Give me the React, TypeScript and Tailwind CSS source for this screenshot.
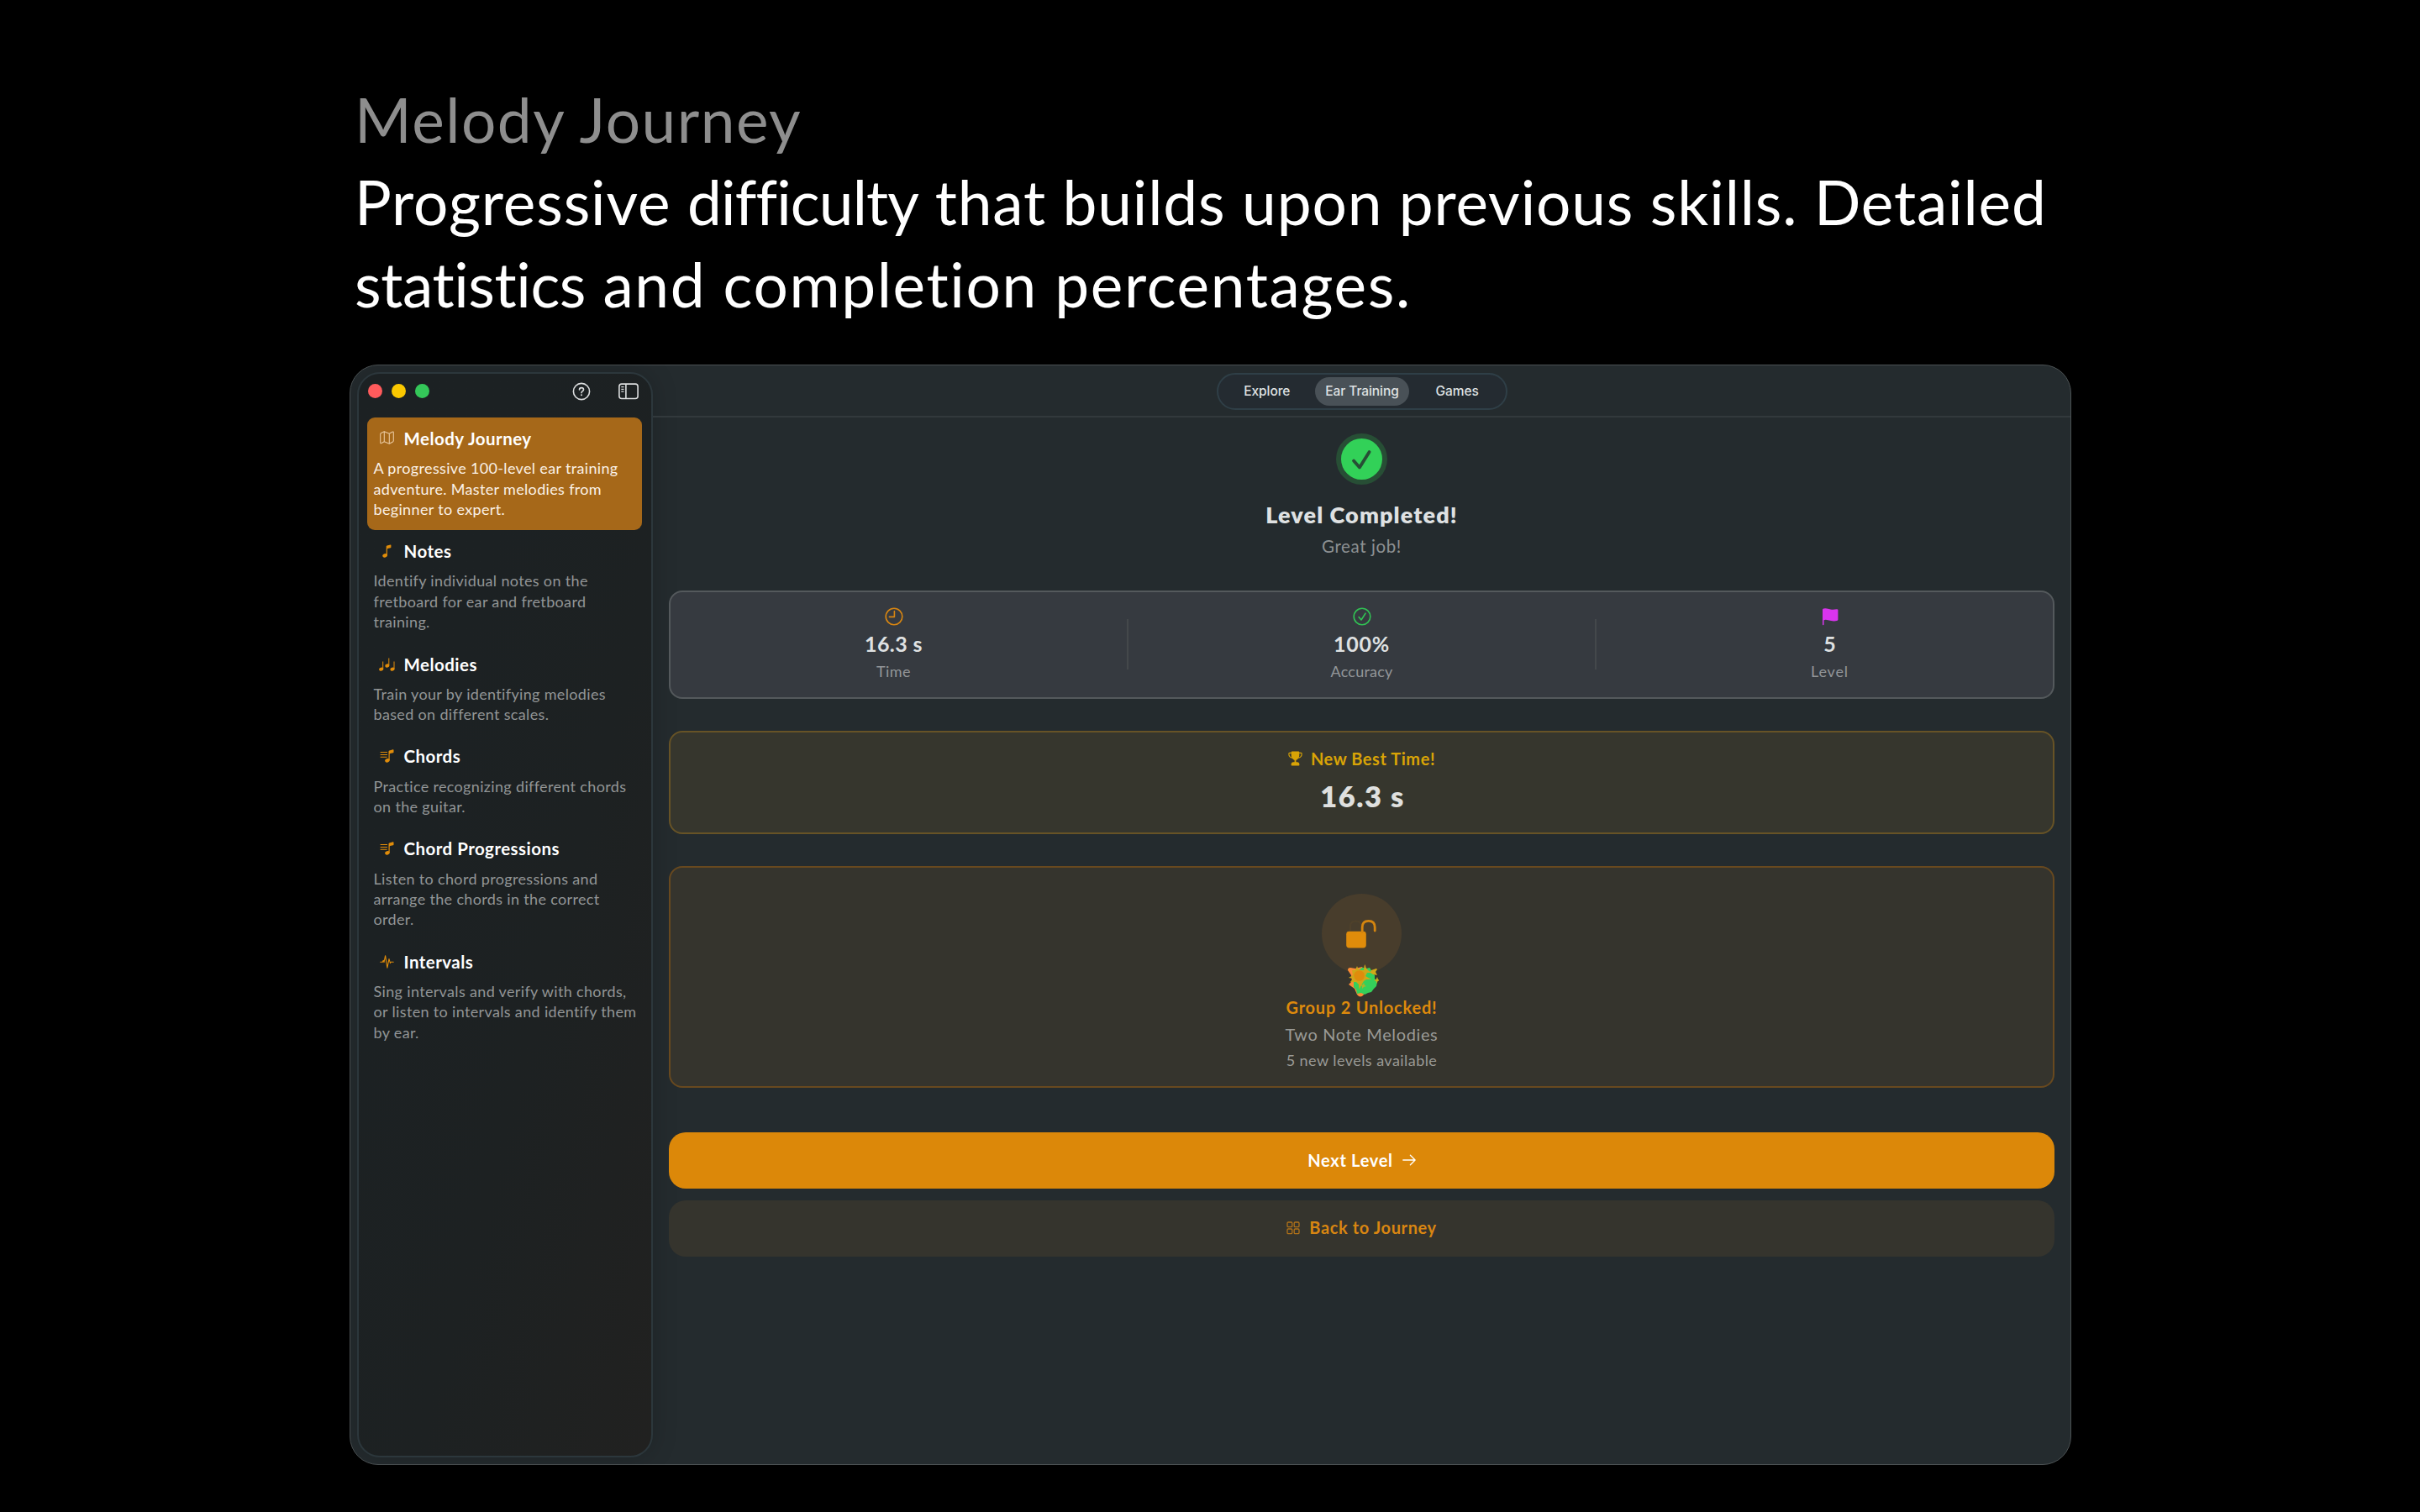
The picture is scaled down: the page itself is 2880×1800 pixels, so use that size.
import type { ReactNode } from "react";
import clsx from "clsx";

type IconProps = { className?: string };

function MapIcon({ className }: IconProps) {
  return (
    <svg viewBox="0 0 17 16" className={className} fill="none" stroke="currentColor" strokeWidth="1.1" strokeLinejoin="round">
      <path d="M.7 4Q.7 3 1.6 2.5L5.3.7L11.3 3.2L14.8 1.2Q16.3.5 16.3 2V11.6Q16.3 12.5 15.5 13L11.3 15.3L5.3 12.8L2.1 14.6Q.7 15.3.7 13.8Z" />
      <path d="M5.3.7V12.8M11.3 3.2V15.3" />
    </svg>
  );
}

function NoteIcon({ className }: IconProps) {
  return (
    <svg viewBox="0 0 17 16" className={className} fill="currentColor">
      <ellipse cx="6.1" cy="13.3" rx="2.9" ry="2.2" transform="rotate(-18 6.1 13.3)" />
      <path d="M7.7 13.2V2.5Q7.7 1.6 8.6 1.4L12.7.4Q13.4.3 13.4 1V3.4Q13.4 4 12.7 4.2L9.4 5Q8.9 5.1 8.9 5.7V13.4Z" />
    </svg>
  );
}

function NotesIcon({ className }: IconProps) {
  return (
    <svg viewBox="0 0 19 16" className={className} fill="currentColor">
      <ellipse cx="2.7" cy="13.6" rx="2.6" ry="2" transform="rotate(-18 2.7 13.6)" />
      <ellipse cx="9.8" cy="9.5" rx="2.6" ry="2" transform="rotate(-18 9.8 9.5)" />
      <ellipse cx="16" cy="13.6" rx="2.6" ry="2" transform="rotate(-18 16 13.6)" />
      <path d="M4.2 4.4h1v9h-1zM11.3.4h1v9h-1zM17.5 4.4h1v9h-1z" />
    </svg>
  );
}

function NoteListIcon({ className }: IconProps) {
  return (
    <svg viewBox="0 0 17 16" className={className} fill="currentColor">
      <path d="M.6 3h8.4v1H.6zM.6 5.9h8.4v1H.6zM.6 8.8h8v1H.6z" />
      <ellipse cx="8.9" cy="13.3" rx="2.8" ry="2.2" transform="rotate(-18 8.9 13.3)" />
      <path d="M10.5 13.2V2.5Q10.5 1.6 11.4 1.4L15.7.3Q16.5.2 16.5.9V3.4Q16.5 4 15.8 4.2L12.3 5Q11.7 5.1 11.7 5.7V13.4Z" />
    </svg>
  );
}

function PulseIcon({ className }: IconProps) {
  return (
    <svg viewBox="0 0 17 16" className={className} fill="none" stroke="currentColor" strokeWidth="1.1" strokeLinecap="round" strokeLinejoin="round">
      <path d="M.8 8.2H3.4L4.2 6.3L5 8.6L6.6.7L8.9 15.2L11 4.6L12.4 9.6L13.2 8.2H16.2" />
    </svg>
  );
}

const items = [
  {
    title: "Melody Journey",
    icon: MapIcon,
    lines: ["A progressive 100-level ear training", "adventure. Master melodies from", "beginner to expert."],
    selected: true,
  },
  {
    title: "Notes",
    icon: NoteIcon,
    lines: ["Identify individual notes on the", "fretboard for ear and fretboard", "training."],
  },
  {
    title: "Melodies",
    icon: NotesIcon,
    lines: ["Train your by identifying melodies", "based on different scales."],
  },
  {
    title: "Chords",
    icon: NoteListIcon,
    lines: ["Practice recognizing different chords", "on the guitar."],
  },
  {
    title: "Chord Progressions",
    icon: NoteListIcon,
    lines: ["Listen to chord progressions and", "arrange the chords in the correct", "order."],
  },
  {
    title: "Intervals",
    icon: PulseIcon,
    lines: ["Sing intervals and verify with chords,", "or listen to intervals and identify them", "by ear."],
  },
];

function Sidebar() {
  return (
    <aside className="my-[8px] ml-[8px] flex w-[352px] shrink-0 flex-col rounded-[27px] border-2 border-[#2c373c] bg-linear-to-br from-[#1c2123] from-30% via-[#1d2122] via-60% to-[#212120] pr-[11px] pl-[10px] shadow-[0_0_30px_rgba(0,0,0,0.18)]">
      <div className="flex h-[52px] items-start pt-[10px]">
        <div className="flex h-[21px] items-center gap-[11px]">
          <span className="ml-[1px] size-[17px] rounded-full bg-[#ff5b5c]" />
          <span className="size-[17px] rounded-full bg-[#fac800]" />
          <span className="size-[17px] rounded-full bg-[#34c759]" />
        </div>
        <svg viewBox="0 0 22 22" className="ml-auto size-[22px] text-[#dcdedf]" fill="none" stroke="currentColor" strokeWidth="1.6">
          <circle cx="11" cy="11" r="9.6" />
          <path d="M8.5 8.9Q8.5 6.6 11 6.6Q13.5 6.6 13.5 8.7Q13.5 9.9 12.2 10.7Q11 11.5 11 12.7" strokeLinecap="round" />
          <circle cx="11" cy="15.3" r="1" fill="currentColor" stroke="none" />
        </svg>
        <svg viewBox="0 0 24 20" className="mr-[4px] ml-[33px] mt-[1px] h-5 w-6 text-[#dcdedf]" fill="none" stroke="currentColor" strokeWidth="1.6">
          <rect x=".9" y="1.1" width="22.2" height="17.4" rx="3" />
          <path d="M8.9 1.1V18.5" />
          <path d="M3.3 4.6H6.5M3.3 7.4H6.5M3.3 10.2H6.5" strokeWidth="1.2" />
        </svg>
      </div>
      {items.map((item) => (
        <div
          key={item.title}
          className={clsx("rounded-[9px] pt-[11px] pb-[13.1px] pl-[7.5px]", item.selected && "bg-[#a66819]")}
        >
          <div className="flex h-7 items-center">
            <span className="flex w-8 justify-center">
              <item.icon
                className={clsx("h-4", item.selected ? "mb-0.5 text-[#eac9a0]" : "text-[#e08c0a]")}
              />
            </span>
            <h3 className="ml-[4px] text-[20.5px] leading-7 font-bold tracking-[0.46px] whitespace-nowrap text-white">
              {item.title}
            </h3>
          </div>
          <p
            className={clsx(
              "mt-[9.2px] text-[18px] leading-[24.33px] tracking-[0.34px]",
              item.selected ? "text-[#fbf1e6]" : "text-[#929596]",
            )}
          >
            {item.lines.map((line) => (
              <span key={line} className="block whitespace-nowrap">
                {line}
              </span>
            ))}
          </p>
        </div>
      ))}
    </aside>
  );
}

function Toolbar() {
  return (
    <header className="flex h-[62px] shrink-0 justify-center border-b-2 border-[#32393c] pt-[9px]">
      <nav className="flex h-[44px] w-[346px] items-center rounded-full border-2 border-[#2f3f47] bg-[#242b31] pl-px font-['Inter'] text-[15.5px] font-medium tracking-[-0.08px] text-[#dfe1e2]">
        <span className="w-[115px] text-center">Explore</span>
        <span className="flex h-[34px] w-[112px] items-center justify-center rounded-full bg-[#495157]">
          Ear Training
        </span>
        <span className="w-[115px] text-center">Games</span>
      </nav>
    </header>
  );
}

function Stat({ icon, value, valueClass, label, labelClass }: {
  icon: ReactNode;
  value: string;
  valueClass: string;
  label: string;
  labelClass: string;
}) {
  return (
    <div className="flex flex-1 flex-col items-center">
      {icon}
      <div className={clsx("mt-[5.5px] text-[25px] leading-[30px] font-bold text-[#dfe1e2]", valueClass)}>{value}</div>
      <div className={clsx("mt-[7.5px] text-[18px] leading-[22px] text-[#939699]", labelClass)}>{label}</div>
    </div>
  );
}

function Stats() {
  return (
    <section className="mt-[41px] flex h-[129px] items-start gap-[34px] rounded-[16px] border-[2.5px] border-[#54595c] bg-[#363a40] px-[22px] pt-[18px]">
      <Stat
        icon={
          <svg viewBox="0 0 22 22" className="size-[22px] text-[#d98611]" fill="none" stroke="currentColor" strokeWidth="1.6">
            <circle cx="11" cy="11" r="9.8" />
            <path d="M11.4 4.6V11.4H5.4" strokeLinecap="round" strokeLinejoin="round" />
          </svg>
        }
        value="16.3 s"
        valueClass="tracking-[0.42px]"
        label="Time"
        labelClass="tracking-[0.5px]"
      />
      <div className="mt-[14px] h-[60px] w-0.5 bg-[#44484b]" />
      <Stat
        icon={
          <svg viewBox="0 0 22 22" className="size-[22px] text-[#31c254]" fill="none" stroke="currentColor" strokeWidth="1.6">
            <circle cx="11" cy="11" r="9.8" />
            <path d="M7.1 11.6L10 15L15 7.2" strokeLinecap="round" strokeLinejoin="round" />
          </svg>
        }
        value="100%"
        valueClass="tracking-[0.7px]"
        label="Accuracy"
        labelClass="tracking-[0.22px]"
      />
      <div className="mt-[14px] h-[60px] w-0.5 bg-[#44484b]" />
      <Stat
        icon={
          <svg viewBox="0 0 22 22" className="size-[22px] text-[#d934ee]" fill="currentColor">
            <path d="M2 3Q2 2 3.2 1.6Q5 1.1 7.2 1.5Q9.5 2 11.6 2.5Q14.6 3.1 18.6 2.3Q20.4 2 20.4 3.3V14.4Q20.4 15.6 19 16Q15.5 16.9 12.2 16Q9.6 15.3 7.2 14.9Q5 14.6 3.5 15.2V20.4Q3.5 21.2 2.75 21.2Q2 21.2 2 20.4Z" />
          </svg>
        }
        value="5"
        valueClass="tracking-normal"
        label="Level"
        labelClass="tracking-[0.85px]"
      />
    </section>
  );
}

function BestTime() {
  return (
    <section className="mt-[38px] flex h-[123px] flex-col items-center rounded-[16px] border-2 border-[#675326] bg-[#36362d] pt-[19px]">
      <div className="flex h-6 items-center text-[#d9a406]">
        <svg viewBox="0 0 17 18" className="mr-[10px] h-[18px] w-[17px]" fill="currentColor">
          <path d="M3.7 1.5Q3.7.5 4.7.5H12.3Q13.3.5 13.3 1.5V5Q13.2 9 9.4 11V13.3H10.8Q13.4 13.5 13.4 16.3V16.8Q13.4 17.6 12.6 17.6H4.4Q3.6 17.6 3.6 16.8V16.3Q3.6 13.5 6.2 13.3H7.6V11Q3.8 9 3.7 5Z" />
          <path d="M3.9 2.4H1.7Q.8 2.4.8 3.4Q.9 7.4 5 8.3M13.1 2.4H15.3Q16.2 2.4 16.2 3.4Q16.1 7.4 12 8.3" fill="none" stroke="currentColor" strokeWidth="1.1" />
        </svg>
        <span className="text-[20px] leading-6 font-bold tracking-[0.56px]">New Best Time!</span>
      </div>
      <div className="mt-[13px] pl-[2px] text-[34.5px] leading-10 font-extrabold tracking-[1.5px] text-[#dfe0df]">16.3 s</div>
    </section>
  );
}

// burst of stars that goes off under the lock
function Confetti() {
  return (
    <svg viewBox="0 0 40 42" className="absolute top-[82px] left-[28px] h-[42px] w-[40px]">
      <path d="M3 9Q3 6 6 6L12 7L20 5L32 22L22 38Q18 43 14 38L11 31L4 26L8 22L7 15Z" fill="#fb8b35" />
      <path d="M11 11L17 8L20 6L22 6L25 7L29 6L32 11L35 15L35 19L38 23L37 28L34 31L31 35L27 36L23 38L19 36L14 37L13 32L10 29L10 21Z" fill="#35d05a" />
      <path d="M14 4L15.6 8L19 9L22 9L22.6 4L23.5 2L24.6 6L27 9L30 11L31 9L37 7L38 8L36 11L38 15L33 14L30 12L26 12L24 16L31 20L25 20L22 22L19 27L16.5 32L16 26L13 23L6 23L9 19L4 18L9 15L8 9L12 9Z" fill="#cfa718" />
      <path d="M38 17L39 20L41 21L38.6 22L37.6 25L36.6 22L34 21L36.6 20Z" fill="#c3ae1c" />
      <path d="M22 24L23 27L25 28L22 29L20 31L20 28L18 27L21 26Z" fill="#a9b52a" />
      <circle cx="16.6" cy="15.5" r="6.3" fill="#df8c0c" />
    </svg>
  );
}

function Unlocked() {
  return (
    <section className="mt-[38px] flex h-[264px] flex-col items-center rounded-[16px] border-[2.5px] border-[#68491f] bg-[#35342d] pt-[30.5px]">
      <div className="relative size-[95px] rounded-full bg-[#483d2c]">
        <svg viewBox="0 0 95 95" className="size-[95px]">
          <path d="M34 44V39Q34 32.5 40.5 32.5Q47 32.5 47 39V44" fill="none" stroke="#4f412b" strokeWidth="2" />
          <rect x="29.2" y="44.8" width="23.6" height="19.6" rx="3.4" fill="#e08c0a" />
          <path d="M48.2 45.5V40Q48.2 32.3 55.7 32.3Q63.2 32.3 63.2 40V44" fill="none" stroke="#d4850f" strokeWidth="2.8" strokeLinecap="round" />
        </svg>
        <Confetti />
      </div>
      <div className="mt-[28px] text-[20px] leading-6 font-bold tracking-[0.78px] text-[#de8a0c]">Group 2 Unlocked!</div>
      <div className="mt-[8.5px] text-[20px] leading-6 tracking-[0.63px] text-[#9a9a96]">Two Note Melodies</div>
      <div className="mt-[8px] text-[18px] leading-[22px] tracking-[0.45px] text-[#9a9a96]">5 new levels available</div>
    </section>
  );
}

function Results() {
  return (
    <main className="flex flex-col px-[19px]">
      <div className="mt-[19px] flex size-[61px] items-center justify-center self-center rounded-full bg-[#274e35]">
        <svg viewBox="0 0 49 49" className="size-[49px]">
          <circle cx="24.5" cy="24.5" r="24.5" fill="#32d158" />
          <path d="M15 26.6L22 34.4L33.6 16" fill="none" stroke="#274e35" strokeWidth="3.8" strokeLinecap="round" strokeLinejoin="round" />
        </svg>
      </div>
      <h2 className="mt-[20px] text-center text-[27px] leading-8 font-extrabold tracking-[1.1px] text-[#dfe1e2]">
        Level Completed!
      </h2>
      <p className="mt-[9px] text-center text-[20.5px] leading-6 tracking-[0.6px] text-[#8d9193]">Great job!</p>
      <Stats />
      <BestTime />
      <Unlocked />
      <button className="mt-[52.5px] flex h-[67px] items-center justify-center rounded-[20px] bg-[#dc8809] pb-px text-[20px] font-bold tracking-[0.69px] text-white">
        Next Level
        <svg viewBox="0 0 16 14" className="mt-px ml-[11px] h-[14px] w-4" fill="none" stroke="currentColor" strokeWidth="1.3" strokeLinecap="round" strokeLinejoin="round">
          <path d="M.8 7H15M9.4 1.3L15.1 7L9.4 12.7" />
        </svg>
      </button>
      <button className="mt-[14px] flex h-[67px] items-center justify-center rounded-[20px] bg-[#35342d] pb-[2px] text-[20px] font-bold tracking-[0.62px] text-[#d98611]">
        <svg viewBox="0 0 16 16" className="mt-0.5 mr-[11px] size-4" fill="none" stroke="#b07119" strokeWidth="1.3">
          <rect x="1" y="1" width="5.8" height="5.6" rx="1.2" />
          <rect x="9.2" y="1" width="5.8" height="5.6" rx="1.2" />
          <rect x="1" y="9" width="5.8" height="5.6" rx="1.2" />
          <rect x="9.2" y="9" width="5.8" height="5.6" rx="1.2" />
        </svg>
        Back to Journey
      </button>
    </main>
  );
}

export default function App() {
  return (
    <div className="h-[1800px] w-[2880px] overflow-hidden bg-black font-['Lato',sans-serif]">
      <h1 className="pt-[93px] pl-[422px] text-[73px] leading-[98px] whitespace-nowrap text-white">
        <span className="block tracking-[1.5px] text-[#8e8e8e]">Melody Journey</span>
        <span className="block tracking-[0.86px]">
          Progressive <span className="tracking-[-0.85px]">difficulty</span> that builds upon previous skills. Detailed
        </span>
        <span className="block tracking-[1.65px]">
          <span className="tracking-[-0.4px]">statistics</span> and completion percentages.
        </span>
      </h1>
      <div className="mt-[47px] ml-[416px] flex h-[1310px] w-[2049px] rounded-[34px] border border-[#4b5153] bg-[#242b2e]">
        <Sidebar />
        <div className="flex flex-1 flex-col">
          <Toolbar />
          <Results />
        </div>
      </div>
    </div>
  );
}
